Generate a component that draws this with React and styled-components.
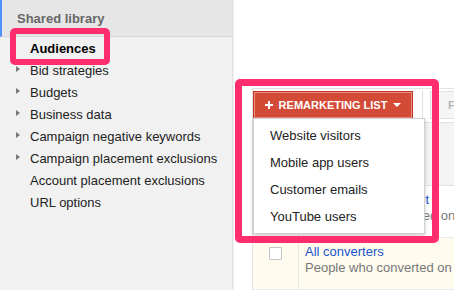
import React from "react";
import styled, { createGlobalStyle } from "styled-components";

const Global = createGlobalStyle`
  html, body { margin: 0; padding: 0; background: #fff; }
  body { font-family: "Liberation Sans", Arial, sans-serif; width: 454px; height: 290px; overflow: hidden; }
`;

const Page = styled.div`
  position: relative;
  display: flex;
  width: 454px;
  height: 290px;
  overflow: hidden;
`;

const Sidebar = styled.aside`
  width: 232px;
  flex: none;
  background: #f1f1f1;
  box-shadow: 1px 0 2px rgba(0, 0, 0, 0.18);
  position: relative;
  z-index: 1;
`;

const SideHeader = styled.div`
  height: 36px;
  background: #e6e6e6;
  border-bottom: 1px solid #d6d6d6;
  border-left: 2px solid #4d90fe;
  display: flex;
  align-items: center;
  padding-left: 15px;
  font-size: 13px;
  font-weight: bold;
  color: #666;
`;

const SideList = styled.ul`
  list-style: none;
  margin: 0;
  padding: 0;
`;

const SideItem = styled.li`
  height: 22px;
  display: flex;
  align-items: center;
  position: relative;
  padding-left: 30px;
  font-size: 13px;
  color: ${(p) => (p.$active ? "#000" : "#222")};
  font-weight: ${(p) => (p.$active ? "bold" : "normal")};
`;

const Caret = styled.span`
  position: absolute;
  left: 16px;
  top: 7px;
  width: 0;
  height: 0;
  border-top: 3.5px solid transparent;
  border-bottom: 3.5px solid transparent;
  border-left: 4px solid #777;
`;

const Main = styled.main`
  flex: 1;
  padding: 88px 0 0 20px;
  display: flex;
  flex-direction: column;
  min-width: 0;
`;

const Toolbar = styled.div`
  position: relative;
  height: 34px;
  box-sizing: border-box;
  border-top: 1px solid #e2e2e2;
  border-left: 1px solid #e2e2e2;
  display: flex;
  align-items: flex-start;
  padding-top: 2px;
`;

const RedButton = styled.button`
  flex: none;
  height: 28px;
  width: 160px;
  box-sizing: border-box;
  background: #d34a37;
  border: 1px solid #c23321;
  box-shadow: inset 0 0 0 1px rgba(255, 200, 190, 0.55);
  color: #fff;
  font-family: "Liberation Sans", Arial, sans-serif;
  font-size: 11px;
  font-weight: bold;
  white-space: nowrap;
  display: flex;
  align-items: center;
  justify-content: center;
  gap: 6px;
  padding: 0;
  margin: 0;
`;

const Separator = styled.span`
  flex: none;
  width: 1px;
  height: 28px;
  background: #e0e0e0;
  margin-left: 9px;
`;

const GrayButton = styled.button`
  flex: none;
  height: 28px;
  margin-left: 7px;
  padding: 0 10px 0 17px;
  background: #f5f5f5;
  border: 1px solid #e0e0e0;
  color: #b5b5b5;
  font-family: "Liberation Sans", Arial, sans-serif;
  font-size: 11px;
  font-weight: bold;
  white-space: nowrap;
`;

const Menu = styled.ul`
  position: absolute;
  left: 0;
  top: 29px;
  width: 172px;
  margin: 0;
  padding: 3px 0;
  list-style: none;
  background: #fff;
  border: 1px solid rgba(0, 0, 0, 0.18);
  box-shadow: 0 2px 4px rgba(0, 0, 0, 0.2);
  box-sizing: border-box;
  z-index: 3;
`;

const MenuItem = styled.li`
  height: 27px;
  display: flex;
  align-items: center;
  padding-left: 16px;
  font-size: 13px;
  color: #222;
`;

const Table = styled.div`
  border-left: 1px solid #e2e2e2;
  display: flex;
  flex-direction: column;
`;

const HeadRow = styled.div`
  height: 64px;
  background: #f3f3f3;
  border-top: 1px solid #e2e2e2;
  border-bottom: 1px solid #e2e2e2;
  box-sizing: border-box;
`;

const Row = styled.div`
  display: grid;
  grid-template-columns: 46px 1fr;
  height: 52px;
  background: ${(p) => (p.$hl ? "#fffcef" : "#fff")};
  border-bottom: 1px solid #ebebeb;
  box-sizing: border-box;
`;

const CheckCell = styled.div`
  border-right: 1px solid #e6e6e6;
  display: flex;
  justify-content: center;
  padding-top: 9px;
`;

const Check = styled.span`
  width: 13px;
  height: 13px;
  box-sizing: border-box;
  border: 1px solid #c6c6c6;
  border-radius: 1px;
  background: #fff;
`;

const NameCell = styled.div`
  padding: 6px 0 0 6px;
  white-space: nowrap;
  overflow: hidden;
`;

const Link = styled.div`
  font-size: 13px;
  color: #1a55cc;
  line-height: 16px;
`;

const Desc = styled.div`
  font-size: 13px;
  color: #777;
  line-height: 16px;
`;

const Highlight = styled.div`
  position: absolute;
  box-sizing: border-box;
  border: 6px solid #ff2d6e;
  border-radius: 5px;
  pointer-events: none;
  z-index: 5;
`;

const Plus = () => (
  <svg width="8" height="8" viewBox="0 0 8 8" aria-hidden="true">
    <path d="M3 0h2v3h3v2H5v3H3V5H0V3h3z" fill="#fff" />
  </svg>
);

const Down = () => (
  <svg width="8" height="4" viewBox="0 0 8 4" aria-hidden="true">
    <path d="M0 0h8L4 4z" fill="#fff" />
  </svg>
);

const items = [
  { label: "Audiences", active: true },
  { label: "Bid strategies", caret: true },
  { label: "Budgets", caret: true },
  { label: "Business data", caret: true },
  { label: "Campaign negative keywords", caret: true },
  { label: "Campaign placement exclusions", caret: true },
  { label: "Account placement exclusions" },
  { label: "URL options" },
];

const menu = ["Website visitors", "Mobile app users", "Customer emails", "YouTube users"];

export default function App() {
  return (
    <Page>
      <Global />
      <Sidebar>
        <SideHeader>Shared library</SideHeader>
        <SideList>
          {items.map((it) => (
            <SideItem key={it.label} $active={it.active}>
              {it.caret && <Caret />}
              {it.label}
            </SideItem>
          ))}
        </SideList>
      </Sidebar>
      <Main>
        <Toolbar>
          <RedButton>
            <Plus />
            <span>REMARKETING LIST</span>
            <Down />
          </RedButton>
          <Separator />
          <GrayButton>FILTER</GrayButton>
          <Menu>
            {menu.map((m) => (
              <MenuItem key={m}>{m}</MenuItem>
            ))}
          </Menu>
        </Toolbar>
        <Table>
          <HeadRow />
          <Row>
            <CheckCell>
              <Check />
            </CheckCell>
            <NameCell>
              <Link>Viewed shopping cart</Link>
              <Desc>People who purchased on your site</Desc>
            </NameCell>
          </Row>
          <Row $hl>
            <CheckCell>
              <Check />
            </CheckCell>
            <NameCell>
              <Link>All converters</Link>
              <Desc>People who converted on your site</Desc>
            </NameCell>
          </Row>
        </Table>
      </Main>
      <Highlight style={{ left: 10, top: 28, width: 100, height: 37 }} />
      <Highlight style={{ left: 235, top: 79, width: 204, height: 164, borderWidth: 7 }} />
    </Page>
  );
}
